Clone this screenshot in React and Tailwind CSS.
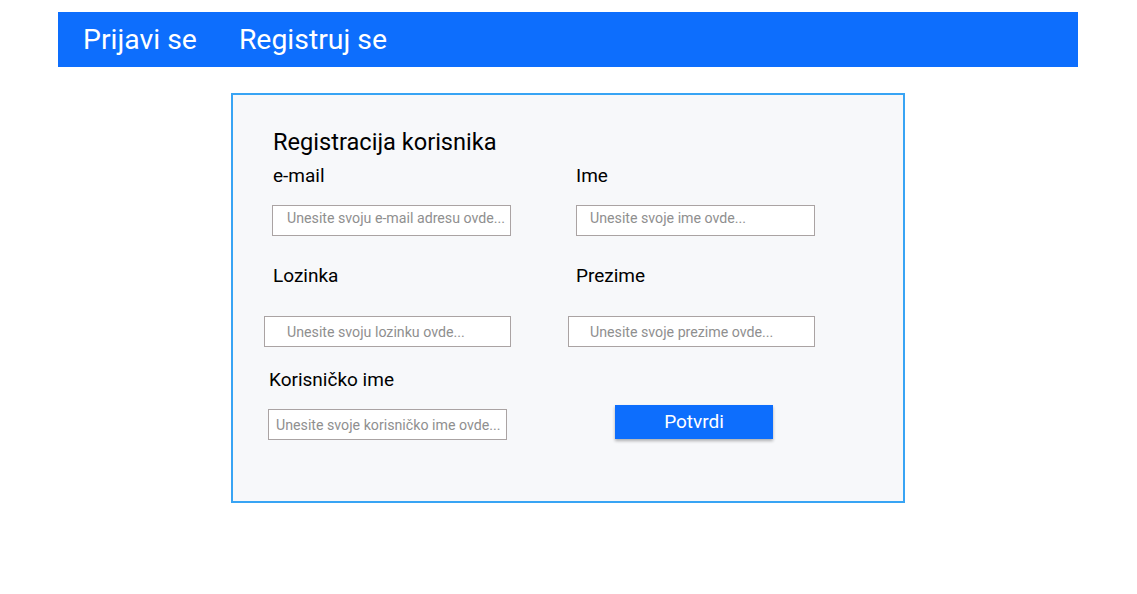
import React from "react";

function Field({ label, placeholder, labelMl, inputMl, inputW, padL, labelGap, padB = "" }) {
  return (
    <div className="flex flex-col">
      <div className={`text-[19px] leading-[24px] text-black ${labelMl}`}>{label}</div>
      <input
        readOnly
        placeholder={placeholder}
        className={`h-[31px] border border-[#aaa3a3] bg-white pr-0 text-[14.2px] outline-none placeholder:text-[#8f8f8f] ${padB} ${labelGap} ${inputMl} ${inputW} ${padL}`}
        style={{ fontFamily: "Roboto, sans-serif" }}
      />
    </div>
  );
}

export default function App() {
  return (
    <div className="min-h-[594px] w-full bg-white pt-3" style={{ fontFamily: "Roboto, 'Liberation Sans', sans-serif" }}>
      <div className="ml-[58px] flex h-[55px] w-[1020px] items-center bg-[#0d6efd] pl-[25px] text-[28.4px] leading-[34px] text-white">
        <span>Prijavi se</span>
        <span className="ml-[42px]">Registruj se</span>
      </div>

      <div className="ml-[231px] mt-[26px] w-[674px] border-2 border-[#38a4f4] bg-[#f7f8fa] pb-[61px] pl-[40px] pt-[33px]">
        <div className="text-[23.6px] leading-[28px] text-black">Registracija korisnika</div>

        <div className="mt-[8px] grid grid-cols-[303px_1fr]">
          <Field label="e-mail" placeholder="Unesite svoju e-mail adresu ovde..." labelMl="" inputMl="-ml-px" inputW="w-[239px]" padL="pl-[14px]" labelGap="mt-[17px]" padB="pb-[5px]" />
          <Field label="Ime" placeholder="Unesite svoje ime ovde..." labelMl="" inputMl="" inputW="w-[239px]" padL="pl-[13px]" labelGap="mt-[17px]" padB="pb-[5px]" />
        </div>

        <div className="mt-[28px] grid grid-cols-[303px_1fr]">
          <Field label="Lozinka" placeholder="Unesite svoju lozinku ovde..." labelMl="" inputMl="-ml-[9px]" inputW="w-[247px]" padL="pl-[22px]" labelGap="mt-[28px]" />
          <Field label="Prezime" placeholder="Unesite svoje prezime ovde..." labelMl="" inputMl="-ml-[8px]" inputW="w-[247px]" padL="pl-[21px]" labelGap="mt-[28px]" />
        </div>

        <div className="mt-[21px] grid grid-cols-[303px_1fr]">
          <Field label="Korisničko ime" placeholder="Unesite svoje korisničko ime ovde..." labelMl="-ml-[4px]" inputMl="-ml-[5px]" inputW="w-[239px]" padL="pl-[7px]" labelGap="mt-[17px]" />
          <div className="pt-[37px]">
            <button className="ml-[39px] h-[34px] w-[158px] bg-[#0d6efd] text-[19px] text-white shadow-[0_2px_3px_rgba(0,0,0,0.3)]">
              Potvrdi
            </button>
          </div>
        </div>
      </div>
    </div>
  );
}
